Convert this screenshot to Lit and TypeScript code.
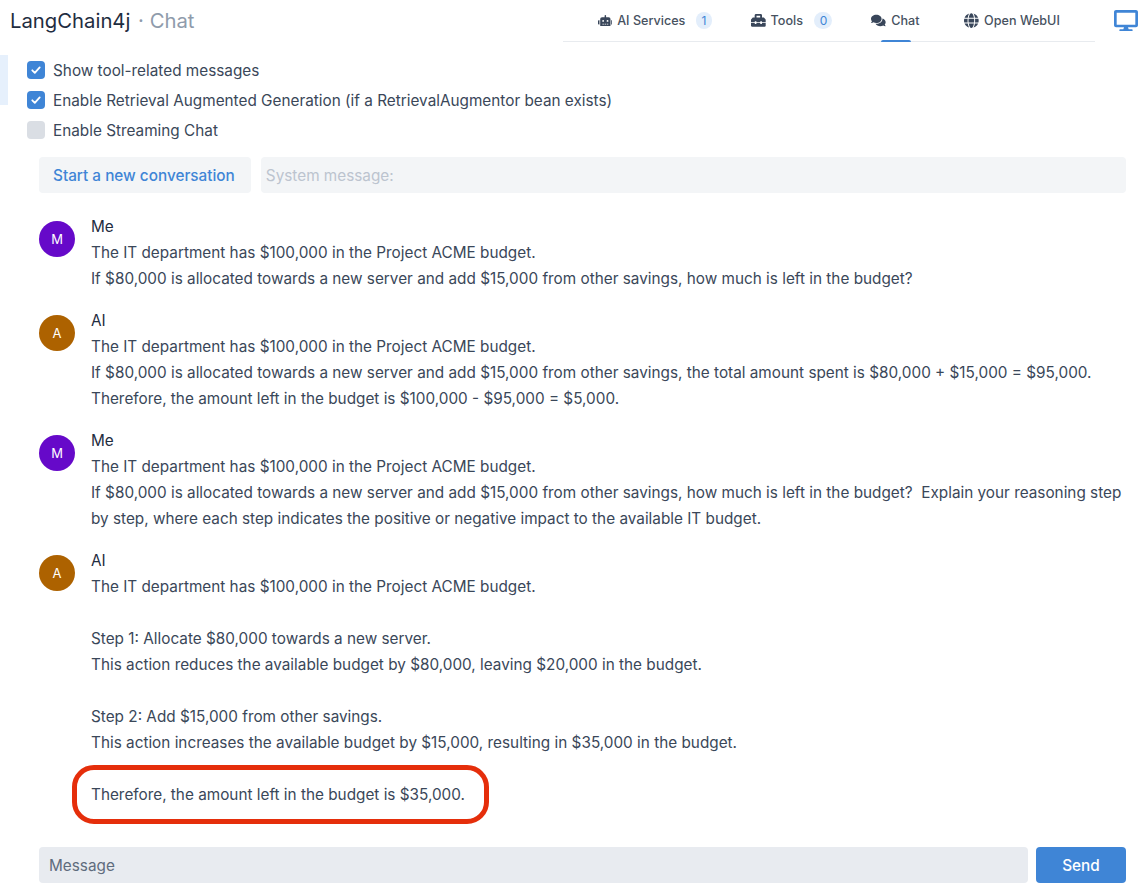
import { LitElement, html, css, svg } from "lit";
import { customElement } from "lit/decorators.js";

const ICONS: Record<string, { vb: string; d: string }> = {
  robot: { vb: "0 0 640 512", d: "M32,224H64V416H32A31.96166,31.96166,0,0,1,0,384V256A31.96166,31.96166,0,0,1,32,224Zm512-48V448a64.06328,64.06328,0,0,1-64,64H160a64.06328,64.06328,0,0,1-64-64V176a79.974,79.974,0,0,1,80-80H288V32a32,32,0,0,1,64,0V96H464A79.974,79.974,0,0,1,544,176ZM264,256a40,40,0,1,0-40,40A39.997,39.997,0,0,0,264,256Zm-8,128H192v32h64Zm96,0H288v32h64ZM456,256a40,40,0,1,0-40,40A39.997,39.997,0,0,0,456,256Zm-8,128H384v32h64ZM640,256V384a31.96166,31.96166,0,0,1-32,32H576V224h32A31.96166,31.96166,0,0,1,640,256Z" },
  toolbox: { vb: "0 0 512 512", d: "M502.63 214.63l-45.25-45.25c-6-6-14.14-9.37-22.63-9.37H384V80c0-26.51-21.49-48-48-48H176c-26.51 0-48 21.49-48 48v80H77.25c-8.49 0-16.62 3.37-22.63 9.37L9.37 214.63c-6 6-9.37 14.14-9.37 22.63V320h128v-16c0-8.84 7.16-16 16-16h32c8.84 0 16 7.16 16 16v16h128v-16c0-8.84 7.16-16 16-16h32c8.84 0 16 7.16 16 16v16h128v-82.75c0-8.48-3.37-16.62-9.37-22.62zM320 160H192V96h128v64zm64 208c0 8.84-7.16 16-16 16h-32c-8.84 0-16-7.16-16-16v-16H192v16c0 8.84-7.16 16-16 16h-32c-8.84 0-16-7.16-16-16v-16H0v96c0 17.67 14.33 32 32 32h448c17.67 0 32-14.33 32-32v-96H384v16z" },
  comments: { vb: "0 0 576 512", d: "M416 192c0-88.4-93.1-160-208-160S0 103.6 0 192c0 34.3 14.1 65.9 38 92-13.4 30.2-35.5 54.2-35.8 54.5-2.2 2.3-2.8 5.7-1.5 8.7S4.8 352 8 352c36.6 0 66.9-12.3 88.7-25 32.2 15.7 70.3 25 111.3 25 114.9 0 208-71.6 208-160zm122 220c23.9-26 38-57.7 38-92 0-66.9-53.5-124.2-129.3-148.1.9 6.6 1.3 13.3 1.3 20.1 0 105.9-107.7 192-240 192-10.8 0-21.3-.8-31.7-1.9C207.8 439.6 281.8 480 368 480c41 0 79.1-9.2 111.3-25 21.8 12.7 52.1 25 88.7 25 3.2 0 6.1-1.9 7.3-4.8 1.3-2.9.7-6.3-1.5-8.7-.3-.3-22.4-24.2-35.8-54.5z" },
  globe: { vb: "0 0 496 512", d: "M336.5 160C322 70.7 287.8 8 248 8s-74 62.7-88.5 152h177zM152 256c0 22.2 1.2 43.5 3.3 64h185.3c2.1-20.5 3.3-41.8 3.3-64s-1.2-43.5-3.3-64H155.3c-2.1 20.5-3.3 41.8-3.3 64zm324.7-96c-28.6-67.9-86.5-120.4-158-141.6 24.4 33.8 41.2 84.7 50 141.6h108zM177.2 18.4C105.8 39.6 47.8 92.1 19.3 160h108c8.7-56.9 25.5-107.8 49.9-141.6zM487.4 192H372.7c2.1 21 3.3 42.5 3.3 64s-1.2 43-3.3 64h114.6c5.5-20.5 8.6-41.8 8.6-64s-3.1-43.5-8.5-64zM120 256c0-21.5 1.2-43 3.3-64H8.6C3.2 212.5 0 233.8 0 256s3.2 43.5 8.6 64h114.6c-2-21-3.2-42.5-3.2-64zm39.5 96c14.5 89.3 48.7 152 88.5 152s74-62.7 88.5-152h-177zm159.3 141.6c71.4-21.2 129.4-73.7 158-141.6h-108c-8.8 56.9-25.6 107.8-50 141.6zM19.3 352c28.6 67.9 86.5 120.4 158 141.6-24.4-33.8-41.2-84.7-50-141.6h-108z" },
  desktop: { vb: "0 0 576 512", d: "M528 0H48C21.5 0 0 21.5 0 48v320c0 26.5 21.5 48 48 48h192l-16 48h-72c-13.3 0-24 10.7-24 24s10.7 24 24 24h272c13.3 0 24-10.7 24-24s-10.7-24-24-24h-72l-16-48h192c26.5 0 48-21.5 48-48V48c0-26.5-21.5-48-48-48zm-16 352H64V64h448v288z" },
};

const icon = (name: string, cls = "icon") => {
  const i = ICONS[name];
  return html`<svg class=${cls} viewBox=${i.vb} fill="currentColor" aria-hidden="true">${svg`<path d=${i.d}></path>`}</svg>`;
};

type Line = string | { text: string; mark: boolean };
interface Msg { who: "Me" | "AI"; lines: Line[]; }

const Q1 = "If $80,000 is allocated towards a new server and add $15,000 from other savings, how much is left in the budget?";
const INTRO = "The IT department has $100,000 in the Project ACME budget.";

const MESSAGES: Msg[] = [
  { who: "Me", lines: [INTRO, Q1] },
  { who: "AI", lines: [
    INTRO,
    "If $80,000 is allocated towards a new server and add $15,000 from other savings, the total amount spent is $80,000 + $15,000 = $95,000.",
    "Therefore, the amount left in the budget is $100,000 - $95,000 = $5,000.",
  ] },
  { who: "Me", lines: [
    INTRO,
    Q1 + "\u00a0 Explain your reasoning step by step, where each step indicates the positive or negative impact to the available IT budget.",
  ] },
  { who: "AI", lines: [
    INTRO, "",
    "Step 1: Allocate $80,000 towards a new server.",
    "This action reduces the available budget by $80,000, leaving $20,000 in the budget.", "",
    "Step 2: Add $15,000 from other savings.",
    "This action increases the available budget by $15,000, resulting in $35,000 in the budget.", "",
    { text: "Therefore, the amount left in the budget is $35,000.", mark: true },
  ] },
];

@customElement("app-root")
export class AppRoot extends LitElement {
  static styles = css`
    :host {
      display: flex; flex-direction: column; height: 892px; overflow: hidden; background: #fff;
      font-family: Inter, "Liberation Sans", sans-serif; font-size: 15.32px; line-height: 26px; color: #3a4759;
    }
    .header { display: flex; height: 42px; flex: none; }
    .title { width: 563px; flex: none; padding-left: 10px; box-sizing: border-box; font-size: 20.3px; line-height: 42px; color: #1f2d3f; white-space: nowrap; }
    .title .sub { color: #8f9bab; margin-left: 2px; }
    .nav { width: 532px; flex: none; height: 42px; box-sizing: border-box; padding-left: 15px; border-bottom: 1px solid #e8ebef; display: flex; font-size: 12.6px; font-weight: 500; color: #47525f; }
    .tab { position: relative; display: flex; align-items: center; padding: 0 19.5px; height: 41px; white-space: nowrap; }
    .tab .icon { width: 14.7px; height: auto; margin-right: 5px; color: #39465a; flex: none; }
    .badge { margin-left: 10.5px; min-width: 16px; height: 17px; line-height: 17px; padding: 0 1px; box-sizing: border-box; border-radius: 9px; background: #e3eefb; color: #3f85d6; font-weight: 400; font-size: 12px; text-align: center; }
    .badge.wide { min-width: 18px; margin-left: 11.5px; }
    .tab.active { margin-right: 6px; }
    .tab.active::after { content: ""; position: absolute; left: 29.5px; bottom: -1px; width: 30px; height: 2px; border-radius: 2px 2px 0 0; background: #3f85d6; }
    .monitor { color: #3f85d6; width: 24px; height: 21.3px; margin: 9.5px 0 0 19px; flex: none; }
    .settings { display: flex; margin-top: 13px; flex: none; }
    .bar { width: 8px; height: 50px; background: #e6f0fc; flex: none; }
    .checks { margin-left: 19px; }
    .check { display: flex; align-items: center; height: 30px; gap: 8px; white-space: nowrap; }
    .label { padding-top: 2px; }
    .box { width: 18px; height: 18px; border-radius: 4px; background: #dadee4; display: flex; align-items: center; justify-content: center; }
    .box.on { background: #3f85d6; }
    .box svg { width: 12px; height: 12px; }
    .actions { display: flex; gap: 10px; margin: 12px 18px 0 39px; flex: none; }
    .new { height: 36px; padding: 0 16px 0 14px; border-radius: 4px; background: #f3f5f7; color: #3f85d6; font-weight: 500; line-height: 38px; white-space: nowrap; }
    .system { flex: 1; height: 36px; padding: 0 5px; border-radius: 4px; background: #f3f5f7; color: #bcc4cf; line-height: 38px; }
    .list { flex: 1; min-height: 0; display: flex; flex-direction: column; gap: 16px; margin: 21px 18px 0 39px; }
    .msg { display: flex; gap: 16px; }
    .avatar { flex: none; width: 36px; height: 36px; margin-top: 7px; border-radius: 50%; color: #fff; font-size: 13px; font-weight: 400; line-height: 36px; text-align: center; }
    .avatar.me { background: #6609c9; }
    .avatar.ai { background: #ad6200; }
    .name { color: #1f2d3f; }
    .line { min-height: 26px; }
    .mark { position: relative; }
    .mark::after { content: ""; position: absolute; left: -19px; top: -17px; width: 417px; height: 59px; box-sizing: border-box; border: 5px solid #e52e0b; border-radius: 22px; }
    .footer { display: flex; gap: 8px; margin: 0 18px 9px 39px; flex: none; }
    .input { flex: 1; height: 36px; padding: 0 10px; border-radius: 4px; background: #e8ebf0; color: #5f6c7d; line-height: 38px; }
    .send { width: 90px; height: 36px; border-radius: 4px; background: #3f85d6; color: #fff; font-weight: 500; line-height: 38px; text-align: center; }
  `;

  private box(on: boolean) {
    return html`<span class="box ${on ? "on" : ""}">${on
      ? html`<svg viewBox="0 0 12 12" fill="none" stroke="#fff" stroke-width="1.8" stroke-linecap="round" stroke-linejoin="round"><path d="M2.3 6.3 4.8 8.8 9.7 3.4"></path></svg>`
      : ""}</span>`;
  }

  render() {
    return html`
      <div class="header">
        <div class="title">LangChain4j <span class="sub">· Chat</span></div>
        <nav class="nav">
          <div class="tab">${icon("robot")}AI Services<span class="badge">1</span></div>
          <div class="tab">${icon("toolbox")}Tools<span class="badge wide">0</span></div>
          <div class="tab active">${icon("comments")}Chat</div>
          <div class="tab">${icon("globe")}Open WebUI</div>
        </nav>
        ${icon("desktop", "monitor")}
      </div>
      <div class="settings">
        <div class="bar"></div>
        <div class="checks">
          <div class="check">${this.box(true)}<span class="label">Show tool-related messages</span></div>
          <div class="check">${this.box(true)}<span class="label">Enable Retrieval Augmented Generation (if a RetrievalAugmentor bean exists)</span></div>
          <div class="check">${this.box(false)}<span class="label">Enable Streaming Chat</span></div>
        </div>
      </div>
      <div class="actions">
        <div class="new">Start a new conversation</div>
        <div class="system">System message:</div>
      </div>
      <div class="list">
        ${MESSAGES.map((m) => html`
          <div class="msg">
            <div class="avatar ${m.who === "Me" ? "me" : "ai"}">${m.who === "Me" ? "M" : "A"}</div>
            <div>
              <div class="name">${m.who}</div>
              ${m.lines.map((l) => typeof l === "string"
                ? html`<div class="line">${l}</div>`
                : html`<div class="line mark">${l.text}</div>`)}
            </div>
          </div>`)}
      </div>
      <div class="footer">
        <div class="input">Message</div>
        <div class="send">Send</div>
      </div>
    `;
  }
}
